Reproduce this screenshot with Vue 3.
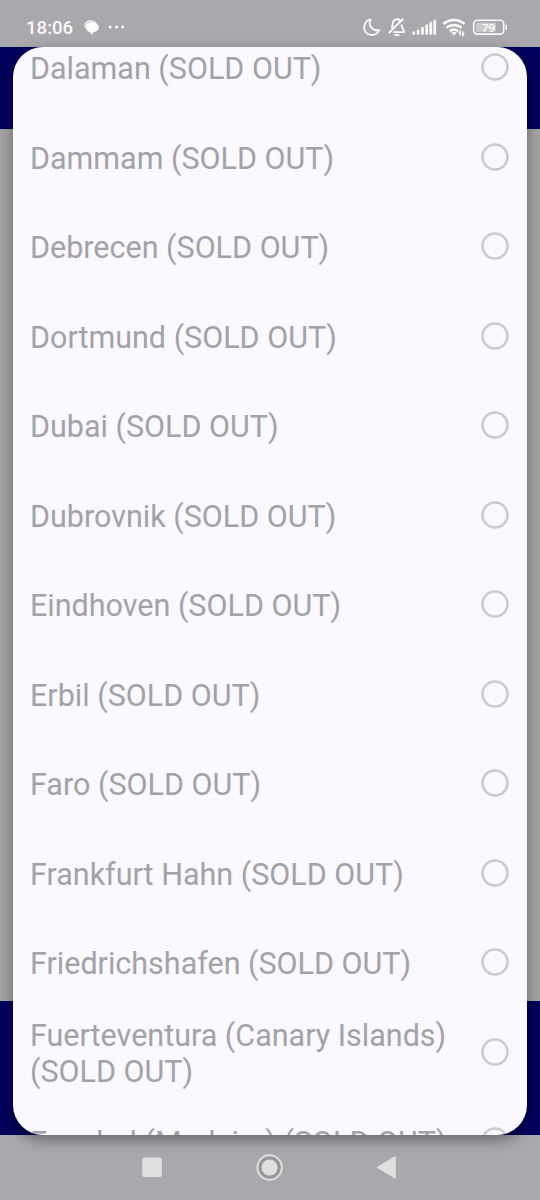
<script setup>
const cities = [
  'Dalaman', 'Dammam', 'Debrecen', 'Dortmund', 'Dubai', 'Dubrovnik', 'Eindhoven',
  'Erbil', 'Faro', 'Frankfurt Hahn', 'Friedrichshafen',
  'Fuerteventura (Canary Islands)', 'Funchal (Madeira)',
]
</script>

<template>
  <div class="screen">
    <header class="status">
      <span class="time">18:06</span>
      <svg class="notice" width="15" height="15" viewBox="0 0 15 15">
        <ellipse cx="6.6" cy="5.3" rx="6.4" ry="5" fill="#ececee" />
        <path d="M2 8.2C1.2 4.6 4 2.2 8.2 2.2c4 0 6.5 2 6.5 5 0 2.9-2.300 4.600-5.200 4.900L8.200 14.800 5.400 11.800C3.900 11.400 2.400 10.200 2 8.200Z" fill="#fff" />
        <path d="M1.500 6.500C1.800 3.500 4.800 1.900 9.400 1.900" fill="none" stroke="#b5b5b8" stroke-width=".5" />
      </svg>
      <svg class="dots" width="18" height="4" viewBox="0 0 18 4" fill="#fafafb">
        <circle cx="2.200" cy="2" r="1.500" /><circle cx="8.500" cy="2" r="1.500" /><circle cx="14.700" cy="2" r="1.500" />
      </svg>
      <svg class="system" width="150" height="24" viewBox="360 15 150 24" fill="none" stroke="#fafafb">
        <path d="M370.600 19.500A7.800 7.800 0 1 0 379.200 29.900A7.300 7.300 0 0 1 370.600 19.500Z" stroke-width="1.900" stroke-linejoin="round" />
        <path d="M391.500 28c.8-1.200 1-2.400 1.100-4 .3-3 1.900-4.700 4.400-4.700 1.300 0 2.300.4 3.100 1.200M401.600 24.500c.1 2.500.8 4.400 2.500 6.700v.9H393.300M388.800 33 403.200 18.800" stroke-width="1.900" stroke-linejoin="round" />
        <path d="M395.200 35h3.400" stroke-width="2" stroke-linecap="round" />
        <path d="M413.700 32.600v1M418.100 31V33.600M422.500 28.300V33.600M426.700 25.700V33.600M430.800 23.200V33.600M434.700 21V33.600" stroke-width="2.800" stroke-linecap="round" />
        <path d="M443.200 24c6.500-5.500 15-5.500 21.500 0M446.400 27.800c4.600-3.900 10.600-3.900 15.200 0M449.600 31.300c2.700-2.300 6.100-2.300 8.800 0" stroke-width="2.500" />
        <path d="m451.200 32.600 2.800 3 2.800-3c-1.600-1.300-4-1.300-5.600 0Z" fill="#fafafb" stroke="none" />
        <path d="M460.300 35.600v-4l-1.500 1.700M462.800 31.200v4l1.500-1.700" stroke-width="1.500" />
        <rect x="473.700" y="20.300" width="30" height="13.800" rx="3.500" stroke-width="1.600" />
        <rect x="476" y="22.700" width="20" height="9" rx="1" fill="#cbccce" stroke="none" />
        <path d="M506.200 25.500v3.600" stroke-width="1.600" stroke-linecap="round" />
        <text x="488.600" y="31.500" text-anchor="middle" class="charge">79</text>
      </svg>
    </header>

    <main class="page">
      <div class="band top"></div>
      <div class="band bottom"></div>
    </main>

    <footer class="nav">
      <svg width="540" height="65" viewBox="0 1135 540 65">
        <rect x="142.300" y="1158" width="20" height="20" rx="2.500" fill="#8e8e91" opacity=".5" />
        <rect x="142.200" y="1157.500" width="19.700" height="19.700" rx="2.500" fill="#e0e0e0" />
        <circle cx="269.600" cy="1167.500" r="12.200" fill="#98989b" stroke="#e0e0e0" stroke-width="2" />
        <circle cx="269.600" cy="1167.500" r="8" fill="#e0e0e0" />
        <path d="M377.200 1166.700 394.500 1156.500Q395.800 1155.800 395.800 1157.200V1177.500Q395.800 1179 394.500 1178.300L377.200 1168.100Q376.300 1167.400 377.200 1166.700Z" fill="#e0e0e0" />
      </svg>
    </footer>

    <section class="dialog">
      <ul class="list">
        <li v-for="city in cities" :key="city" class="row">
          <span class="label">{{ city }} (SOLD OUT)</span>
          <svg class="radio" width="28" height="28" viewBox="0 0 28 28">
            <circle cx="14" cy="14" r="12.500" />
          </svg>
        </li>
      </ul>
    </section>
  </div>
</template>

<style>
body { margin: 0; }
</style>

<style scoped>
.screen {
  position: relative;
  width: 540px;
  height: 1200px;
  overflow: hidden;
  display: flex;
  flex-direction: column;
  background: #a9a8ad;
  font-family: Roboto, "Liberation Sans", sans-serif;
}
.status {
  height: 47px;
  box-sizing: border-box;
  display: flex;
  align-items: center;
  padding: 7px 30px 0 26px;
  background: #a9a8ad;
}
.time {
  width: 58px;
  padding-top: 1px;
  font-size: 18.600px;
  font-weight: 500;
  line-height: 24px;
  color: #fafafb;
}
.notice { flex: none; }
.dots { margin-left: 9px; }
.system { margin-left: auto; }
.charge {
  font-size: 11.500px;
  font-weight: 500;
  fill: #fff;
  stroke: none;
}
.page {
  flex: 1;
  display: flex;
  flex-direction: column;
  justify-content: space-between;
  background: #a3a3a3;
}
.band { background: #00005c; }
.top { height: 82px; }
.bottom { height: 134.500px; }
.nav { height: 65px; background: #a9a8ad; }
.nav svg { display: block; }
.dialog {
  position: absolute;
  left: 13px;
  top: 47px;
  width: 514px;
  height: 1088px;
  border-radius: 30px;
  overflow: hidden;
  background: #faf9ff;
  box-shadow: 0 5px 14px rgba(0, 0, 0, .38);
}
.list {
  list-style: none;
  margin: -24.600px 0 0;
  padding: 0;
}
.row {
  height: 89.500px;
  box-sizing: border-box;
  padding: 0 18px 0 17px;
  display: flex;
  align-items: center;
  justify-content: space-between;
}
.label {
  width: 425px;
  padding-top: 4px;
  font-size: 30.500px;
  line-height: 36px;
  color: #a3a2a7;
}
.radio {
  flex: none;
  fill: none;
  stroke: #cbcacf;
  stroke-width: 2.500px;
}
</style>
